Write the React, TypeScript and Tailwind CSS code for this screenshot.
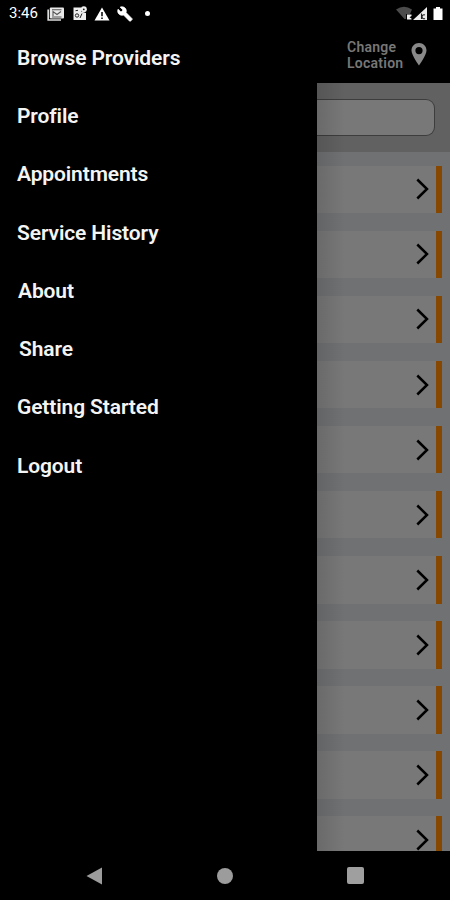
import { clsx } from "clsx";

const menuItems = [
  { label: "Browse Providers", indent: "pl-[17px]" },
  { label: "Profile", indent: "pl-[17px]" },
  { label: "Appointments", indent: "pl-[17px]" },
  { label: "Service History", indent: "pl-[17px]" },
  { label: "About", indent: "pl-[18px]" },
  { label: "Share", indent: "pl-[19px]" },
  { label: "Getting Started", indent: "pl-[17px]" },
  { label: "Logout", indent: "pl-[17px]" },
];

const providerRows = Array.from({ length: 11 }, (_, index) => index);

function StatusBar() {
  return (
    <header className="flex h-[27px] shrink-0 items-center pl-[9px] pr-[6px] text-white">
      <span className="w-[38px] text-[15px] leading-none">3:46</span>
      <svg className="h-[14px] w-[18px]" viewBox="0 0 18 14" aria-hidden="true">
        <path d="M1.2 2.5V13H14" fill="none" stroke="#ddd" strokeWidth="1.7" />
        <rect x="2.8" y="0.5" width="14.2" height="11" rx="1" fill="#e8e8e8" />
        <path
          d="M6 9V4.500l4 3 4-3M5 2.800h9.500M5 10h9.500"
          fill="none"
          stroke="#555"
          strokeWidth="1.1"
        />
      </svg>
      <svg
        className="ml-[8px] h-[15px] w-[15px]"
        viewBox="0 0 15 15"
        aria-hidden="true"
      >
        <path d="M.5 1.500H8v4l5 1.500v7H.5z" fill="#eee" />
        <circle cx="10.8" cy="3.3" r="3" fill="#eee" />
        <circle cx="10.8" cy="3.3" r="0.9" fill="#111" />
        <circle cx="4" cy="9.5" r="1.7" fill="none" stroke="#222" />
        <path d="M2.500 4.700l2.500-.4M7 12l2-4.500" stroke="#222" />
      </svg>
      <svg
        className="ml-[6px] h-[14px] w-[16px]"
        viewBox="0 0 16 14"
        aria-hidden="true"
      >
        <path d="M8 0.500 15.500 13.500H.500z" fill="#fff" />
        <path d="M8 5v4.200M8 10.500v1.600" stroke="#000" strokeWidth="1.5" />
      </svg>
      <svg
        className="ml-[7px] h-[16px] w-[16px]"
        viewBox="0 0 24 24"
        fill="#fff"
        stroke="#fff"
        aria-hidden="true"
      >
        <path d="M22.700 19l-9.100-9.100c.9-2.300.4-5-1.500-6.900-2-2-5-2.400-7.400-1.300L9 6 6 9 1.600 4.700C.4 7.100.9 10.100 2.900 12.100c1.900 1.900 4.600 2.400 6.900 1.500l9.100 9.100c.4.4 1 .4 1.400 0l2.300-2.300c.5-.4.5-1.100.1-1.400z" />
      </svg>
      <span className="ml-[12px] size-[5px] rounded-full bg-white" />
      <svg
        className="ml-auto h-[15px] w-[48px]"
        viewBox="0 0 48 15"
        aria-hidden="true"
      >
        <path d="M0 3.500Q8 -2 16 3.500L14 8H10v5H8.500z" fill="#4b4b4b" />
        <path d="M11 8.500h4.500V10L13.500 11.300l2 1.200V13.500h-4.500z" fill="#f2f2f2" />
        <path d="M31 1v13H17z" fill="#ededed" />
        <path
          d="M25.500 7.500v5.500M29 9a2 2 0 1 0 0 3.500"
          fill="none"
          stroke="#222"
          strokeWidth="1.1"
        />
        <path d="M40 1h4v1.500h2.500V14h-9V2.500H40z" fill="#fff" />
      </svg>
    </header>
  );
}

function Drawer() {
  return (
    <nav className="w-[317px] shrink-0 bg-black pt-[2px]">
      <ul>
        {menuItems.map((item) => (
          <li
            key={item.label}
            className={clsx(
              "flex h-[58.3px] items-center whitespace-nowrap text-[21px] font-semibold leading-none tracking-[-0.12px] text-[#f4f4f4]",
              item.indent,
            )}
          >
            {item.label}
          </li>
        ))}
      </ul>
    </nav>
  );
}

function ProviderRow() {
  return (
    <li className="flex h-[47.5px] shrink-0 items-center justify-end bg-[#787878]">
      <svg
        className="mr-[6px] h-[24px] w-[16px]"
        viewBox="0 0 16 24"
        fill="none"
        stroke="#000"
        strokeWidth="2.5"
        aria-hidden="true"
      >
        <path d="M3.300 2.500 13 12l-9.700 9.500" />
      </svg>
      <span className="h-full w-[6px] bg-[#864800]" />
    </li>
  );
}

function ProvidersScreen() {
  return (
    <main className="flex min-w-0 flex-1 flex-col">
      <div className="flex h-[56px] shrink-0 justify-end pr-[23px] pt-[12px] text-[#777]">
        <span className="w-[64px] text-[14px] font-semibold leading-4 tracking-[0.25px]">
          Change Location
        </span>
        <svg
          className="mt-[4px] h-[23px] w-[16px]"
          viewBox="0 0 16 23"
          fill="#898989"
          aria-hidden="true"
        >
          <path
            fillRule="evenodd"
            d="M8 0C3.700 0 .5 3.200.5 7.500.5 12 8 22.500 8 22.500s7.500-10.500 7.500-15C15.500 3.200 12.300 0 8 0zm0 4a3.600 3.600 0 1 1 0 7.200A3.600 3.600 0 0 1 8 4z"
          />
        </svg>
      </div>
      <div className="relative flex min-h-0 flex-1 flex-col overflow-hidden bg-[#707172]">
        <div className="h-[69px] shrink-0 bg-[#616162] pr-[15px] pt-[16px]">
          <div className="h-[37px] rounded-r-[9px] border border-l-0 border-[#3d3d3d] bg-[#787878]" />
        </div>
        <ul className="flex flex-col gap-[17.6px] pr-[8px] pt-[13.5px]">
          {providerRows.map((row) => (
            <ProviderRow key={row} />
          ))}
        </ul>
        <div className="absolute inset-y-0 left-0 w-[28px] bg-linear-to-r from-black/12 to-transparent" />
      </div>
    </main>
  );
}

function NavigationBar() {
  return (
    <footer className="flex h-[49px] shrink-0 items-center justify-between bg-black px-[86px]">
      <svg className="h-[18px] w-[17px]" viewBox="0 0 17 18" aria-hidden="true">
        <path d="M.5 9 16 .5v17z" fill="#9c9c9c" />
      </svg>
      <span className="size-[16px] rounded-full bg-[#9c9c9c]" />
      <span className="size-[17px] rounded-[2px] bg-[#9f9f9f]" />
    </footer>
  );
}

export default function App() {
  return (
    <div className="flex h-[900px] w-[450px] flex-col overflow-hidden bg-black font-[Roboto,sans-serif]">
      <StatusBar />
      <div className="flex min-h-0 flex-1">
        <Drawer />
        <ProvidersScreen />
      </div>
      <NavigationBar />
    </div>
  );
}
